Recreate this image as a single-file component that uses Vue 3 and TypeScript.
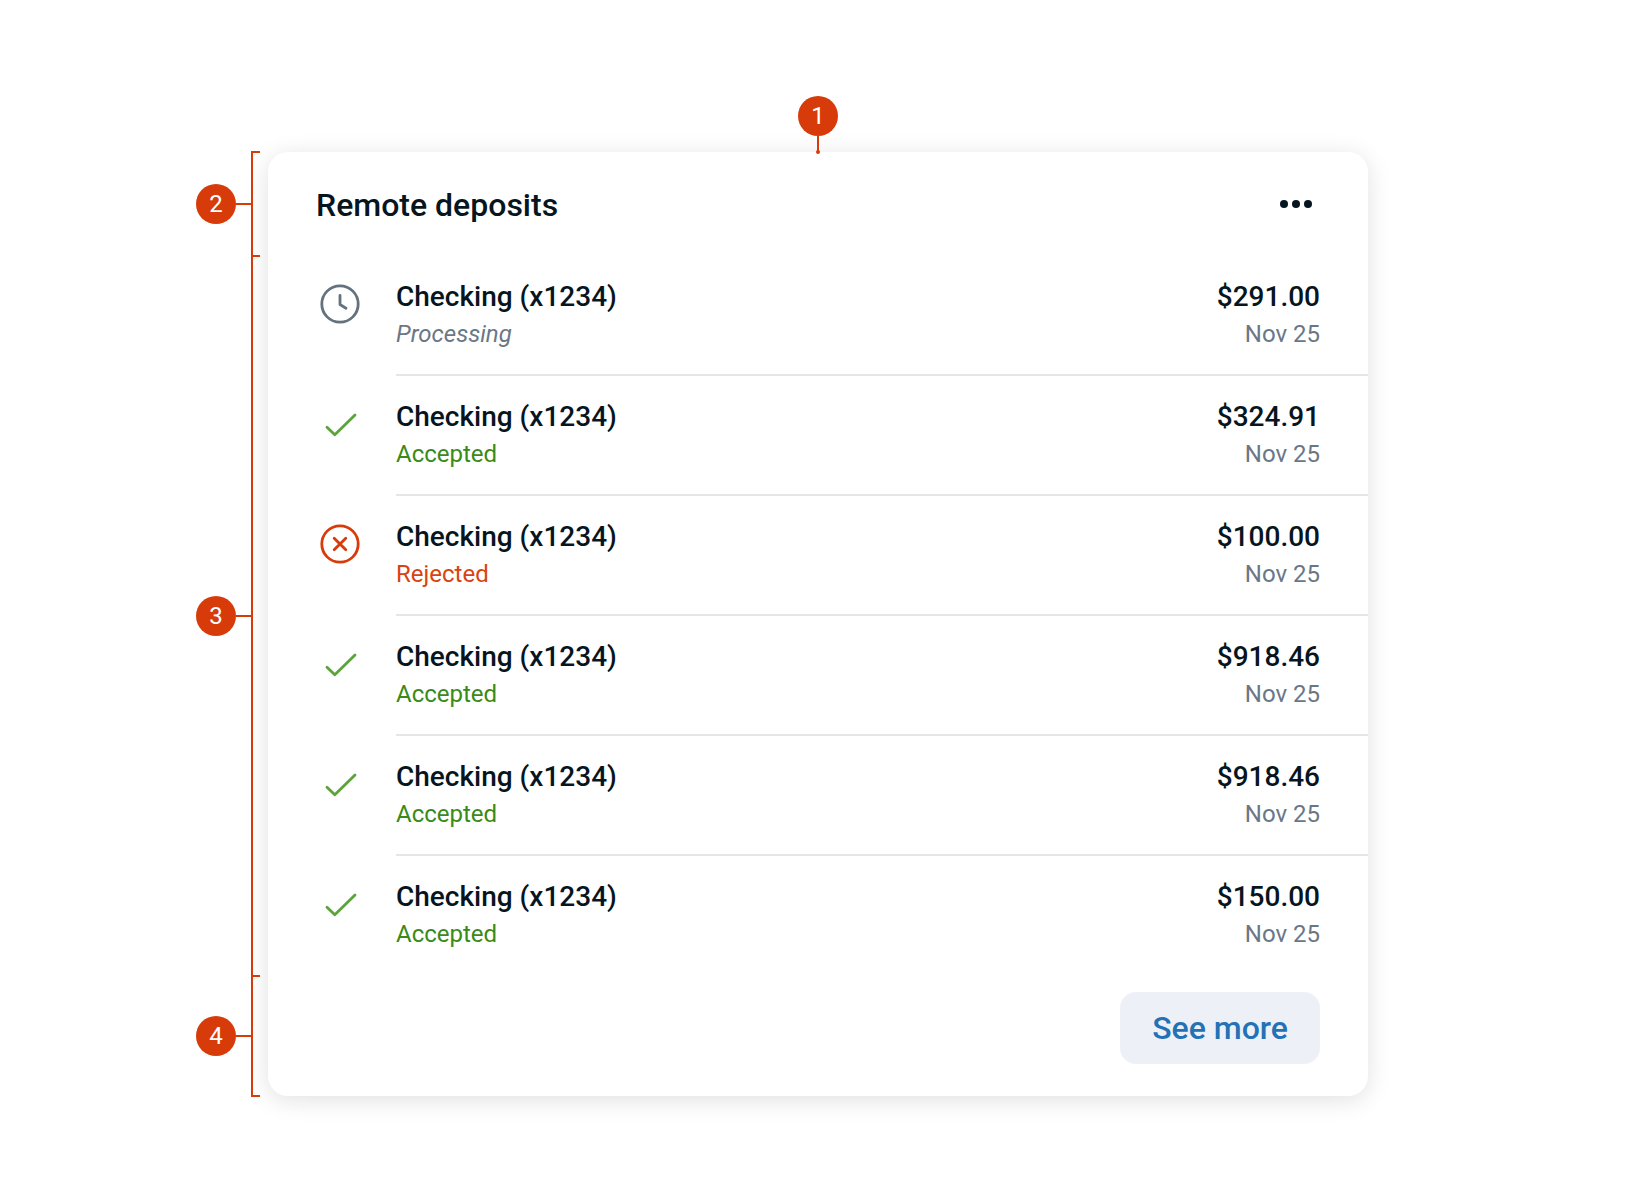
<script setup lang="ts">
type Status = 'Processing' | 'Accepted' | 'Rejected'

interface Deposit {
  id: number
  account: string
  status: Status
  amount: string
  date: string
}

const statuses: [Status, string][] = [
  ['Processing', '$291.00'],
  ['Accepted', '$324.91'],
  ['Rejected', '$100.00'],
  ['Accepted', '$918.46'],
  ['Accepted', '$918.46'],
  ['Accepted', '$150.00'],
]

const deposits: Deposit[] = statuses.map(([status, amount], index) => ({
  id: index,
  account: 'Checking (x1234)',
  status,
  amount,
  date: 'Nov 25',
}))

// Each region's number is also the grid row of the card part it marks.
const regions = [2, 3, 4]
</script>

<template>
  <main class="anatomy">
    <div class="pointer">
      <span class="badge">1</span>
      <span class="pointer-line"></span>
    </div>

    <section class="card" aria-labelledby="card-title">
      <header class="card-header">
        <h1 id="card-title" class="card-title">Remote deposits</h1>
        <button class="menu" type="button" aria-label="More options">
          <svg class="icon" viewBox="0 0 48 48" aria-hidden="true">
            <circle cx="12" cy="24" r="4" />
            <circle cx="24" cy="24" r="4" />
            <circle cx="36" cy="24" r="4" />
          </svg>
        </button>
      </header>

      <ul class="deposits">
        <li v-for="deposit in deposits" :key="deposit.id" class="deposit">
          <svg
            class="icon line"
            :class="deposit.status.toLowerCase()"
            viewBox="0 0 48 48"
            aria-hidden="true"
          >
            <template v-if="deposit.status === 'Processing'">
              <circle cx="24" cy="24" r="18.2" />
              <path d="M24 15.5V24.5l6 3.7" />
            </template>
            <path v-else-if="deposit.status === 'Accepted'" d="M11 27.3l7.8 7.5L39 15" />
            <template v-else>
              <circle cx="24" cy="24" r="18.2" />
              <path d="M18.2 18.2l11.6 11.6M29.8 18.2l-11.6 11.6" />
            </template>
          </svg>
          <div class="details">
            <div class="column">
              <span class="primary">{{ deposit.account }}</span>
              <span class="secondary" :class="deposit.status.toLowerCase()">{{ deposit.status }}</span>
            </div>
            <div class="column end">
              <span class="primary">{{ deposit.amount }}</span>
              <span class="secondary">{{ deposit.date }}</span>
            </div>
          </div>
        </li>
      </ul>

      <footer class="card-footer">
        <button class="more" type="button">See more</button>
      </footer>
    </section>

    <div v-for="region in regions" :key="region" class="region" :style="{ gridRow: region }">
      <span class="badge">{{ region }}</span>
      <span class="region-line"></span>
      <span class="bracket"></span>
    </div>
  </main>
</template>

<style>
body {
  margin: 0;
  background: #ffffff;
}
</style>

<style scoped>
.anatomy {
  display: grid;
  grid-template-columns: 72px minmax(0, 1100px) 72px;
  grid-template-rows: auto auto auto auto;
  justify-content: center;
  padding: 96px 0;
  font-family: Roboto, "Liberation Sans", sans-serif;
  color: #071520;
}

.badge {
  display: flex;
  flex: none;
  align-items: center;
  justify-content: center;
  width: 40px;
  height: 40px;
  border-radius: 50%;
  background: #d83b0a;
  color: #ffffff;
  font-size: 24px;
  line-height: 40px;
}

.pointer {
  grid-column: 2;
  grid-row: 1;
  position: relative;
  z-index: 1;
  display: flex;
  flex-direction: column;
  align-items: center;
}

.pointer-line {
  position: relative;
  width: 2px;
  height: 16px;
  background: #d83b0a;
}

.pointer-line::after {
  content: "";
  position: absolute;
  left: -1px;
  bottom: -2px;
  width: 4px;
  height: 4px;
  border-radius: 50%;
  background: #d83b0a;
}

.region {
  grid-column: 1;
  position: relative;
  display: flex;
  align-items: center;
  padding-right: 8px;
}

.region-line {
  flex: 1;
  height: 2px;
  background: #d83b0a;
}

.bracket {
  align-self: stretch;
  width: 7px;
  margin: -1px 0;
  border: 2px solid #d83b0a;
  border-right: 0;
}

.card {
  grid-column: 2;
  grid-row: 2 / span 3;
  display: grid;
  grid-template-rows: subgrid;
  border-radius: 20px;
  background: #ffffff;
  box-shadow: 0 4px 24px rgba(0, 0, 0, 0.12);
}

.card-header {
  display: flex;
  align-items: flex-start;
  justify-content: space-between;
  padding: 28px 48px 26px;
}

.card-title {
  margin: 0;
  font-size: 32px;
  font-weight: 500;
  line-height: 50px;
}

.menu {
  padding: 0;
  border: 0;
  background: none;
  color: inherit;
  cursor: pointer;
}

.icon {
  display: block;
  flex: none;
  width: 48px;
  height: 48px;
  fill: currentColor;
}

.icon.line {
  fill: none;
  stroke: currentColor;
  stroke-width: 2.8;
  stroke-linecap: round;
  stroke-linejoin: round;
}

.deposits {
  margin: 0;
  padding: 0 0 0 48px;
  list-style: none;
}

.deposit {
  display: flex;
  gap: 32px;
}

.deposit > .icon {
  margin-top: 24px;
}

.details {
  display: flex;
  flex: 1;
  justify-content: space-between;
  padding: 24px 48px 22px 0;
  border-bottom: 2px solid #e6e6e6;
}

.deposit:last-child .details {
  border-color: transparent;
}

.column {
  display: flex;
  flex-direction: column;
  gap: 2px;
}

.end {
  text-align: right;
}

.primary {
  font-size: 28px;
  font-weight: 500;
  line-height: 34px;
}

.secondary {
  color: #6b7785;
  font-size: 24px;
  line-height: 36px;
}

.secondary.processing {
  font-style: italic;
}

.secondary.accepted {
  color: #3a8a17;
}

.secondary.rejected {
  color: #d9430f;
}

.icon.processing {
  color: #64717f;
}

.icon.accepted {
  color: #5ba33a;
}

.icon.rejected {
  color: #d83b0a;
}

.card-footer {
  display: flex;
  justify-content: flex-end;
  padding: 16px 48px 32px;
}

.more {
  padding: 16px 32px;
  border: 0;
  border-radius: 16px;
  background: #edf1f7;
  color: #2472b5;
  font-family: inherit;
  font-size: 32px;
  font-weight: 500;
  line-height: 40px;
  cursor: pointer;
}
</style>
